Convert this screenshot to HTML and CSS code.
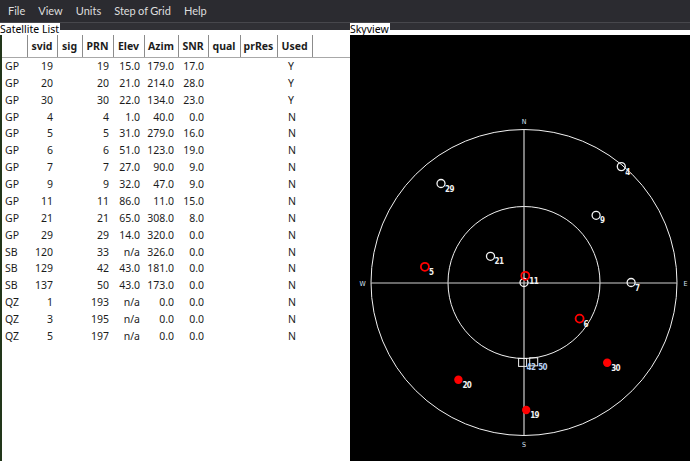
FILE: index.html
```html
<!DOCTYPE html>
<html>
<head>
<meta charset="utf-8">
<link rel="stylesheet" href="styles.css">
</head>
<body>
<div class="menubar">
  <span class="menu-item">File</span>
  <span class="menu-item">View</span>
  <span class="menu-item">Units</span>
  <span class="menu-item">Step of Grid</span>
  <span class="menu-item">Help</span>
</div>
<div class="main">
  <section class="dock dock-list">
    <div class="dock-title"><span class="dock-label">Satellite List</span></div>
    <table class="sat-table">
      <colgroup>
        <col class="c-type"><col class="c-svid"><col class="c-sig"><col class="c-prn"><col class="c-elev"><col class="c-azim"><col class="c-snr"><col class="c-qual"><col class="c-prres"><col class="c-used"><col class="c-fill">
      </colgroup>
      <thead>
        <tr><th></th><th>svid</th><th>sig</th><th>PRN</th><th>Elev</th><th>Azim</th><th>SNR</th><th>qual</th><th>prRes</th><th>Used</th><th class="fill"></th></tr>
      </thead>
      <tbody>
        <tr><td>GP</td><td>19</td><td></td><td>19</td><td>15.0</td><td>179.0</td><td>17.0</td><td></td><td></td><td>Y</td><td></td></tr>
        <tr><td>GP</td><td>20</td><td></td><td>20</td><td>21.0</td><td>214.0</td><td>28.0</td><td></td><td></td><td>Y</td><td></td></tr>
        <tr><td>GP</td><td>30</td><td></td><td>30</td><td>22.0</td><td>134.0</td><td>23.0</td><td></td><td></td><td>Y</td><td></td></tr>
        <tr><td>GP</td><td>4</td><td></td><td>4</td><td>1.0</td><td>40.0</td><td>0.0</td><td></td><td></td><td>N</td><td></td></tr>
        <tr><td>GP</td><td>5</td><td></td><td>5</td><td>31.0</td><td>279.0</td><td>16.0</td><td></td><td></td><td>N</td><td></td></tr>
        <tr><td>GP</td><td>6</td><td></td><td>6</td><td>51.0</td><td>123.0</td><td>19.0</td><td></td><td></td><td>N</td><td></td></tr>
        <tr><td>GP</td><td>7</td><td></td><td>7</td><td>27.0</td><td>90.0</td><td>9.0</td><td></td><td></td><td>N</td><td></td></tr>
        <tr><td>GP</td><td>9</td><td></td><td>9</td><td>32.0</td><td>47.0</td><td>9.0</td><td></td><td></td><td>N</td><td></td></tr>
        <tr><td>GP</td><td>11</td><td></td><td>11</td><td>86.0</td><td>11.0</td><td>15.0</td><td></td><td></td><td>N</td><td></td></tr>
        <tr><td>GP</td><td>21</td><td></td><td>21</td><td>65.0</td><td>308.0</td><td>8.0</td><td></td><td></td><td>N</td><td></td></tr>
        <tr><td>GP</td><td>29</td><td></td><td>29</td><td>14.0</td><td>320.0</td><td>0.0</td><td></td><td></td><td>N</td><td></td></tr>
        <tr><td>SB</td><td>120</td><td></td><td>33</td><td>n/a</td><td>326.0</td><td>0.0</td><td></td><td></td><td>N</td><td></td></tr>
        <tr><td>SB</td><td>129</td><td></td><td>42</td><td>43.0</td><td>181.0</td><td>0.0</td><td></td><td></td><td>N</td><td></td></tr>
        <tr><td>SB</td><td>137</td><td></td><td>50</td><td>43.0</td><td>173.0</td><td>0.0</td><td></td><td></td><td>N</td><td></td></tr>
        <tr><td>QZ</td><td>1</td><td></td><td>193</td><td>n/a</td><td>0.0</td><td>0.0</td><td></td><td></td><td>N</td><td></td></tr>
        <tr><td>QZ</td><td>3</td><td></td><td>195</td><td>n/a</td><td>0.0</td><td>0.0</td><td></td><td></td><td>N</td><td></td></tr>
        <tr><td>QZ</td><td>5</td><td></td><td>197</td><td>n/a</td><td>0.0</td><td>0.0</td><td></td><td></td><td>N</td><td></td></tr>
      </tbody>
    </table>
  </section>
  <section class="dock dock-sky">
    <div class="dock-title"><span class="dock-label">Skyview</span></div>
    <svg class="sky" viewBox="350 35 340 426" width="340" height="426">
      <rect x="350" y="35" width="340" height="426" fill="#000"/>
      <g class="grid">
        <circle cx="524" cy="282.5" r="153"/>
        <circle cx="524" cy="282.5" r="76"/>
        <line class="axis" x1="524" y1="129.5" x2="524" y2="435.5"/>
        <line class="axis" x1="371" y1="283" x2="677" y2="283"/>
      </g>
      <g class="cardinal">
        <text x="524" y="124">N</text>
        <text x="524" y="447">S</text>
        <text x="362.5" y="286">W</text>
        <text x="685.5" y="286">E</text>
      </g>
      <g class="sats">
        <circle class="sat-off" cx="524" cy="282.5" r="4"/>
        <circle class="sat-off" cx="621.3" cy="166.6" r="4"/>
        <circle class="sat-off" cx="631.1" cy="282.5" r="4"/>
        <circle class="sat-off" cx="596.1" cy="215.3" r="4"/>
        <circle class="sat-off" cx="490.5" cy="256.3" r="4"/>
        <circle class="sat-off" cx="441" cy="183.5" r="4"/>
        <circle class="sat-sig" cx="424.9" cy="266.8" r="4"/>
        <circle class="sat-sig" cx="579.6" cy="318.6" r="4"/>
        <circle class="sat-sig" cx="525.3" cy="275.8" r="4"/>
        <circle class="sat-used" cx="526.2" cy="410" r="4.2"/>
        <circle class="sat-used" cx="458.4" cy="379.7" r="4.2"/>
        <circle class="sat-used" cx="607.2" cy="362.8" r="4.2"/>
        <rect class="sat-sbas" x="518.6" y="358.4" width="8" height="8"/>
        <rect class="sat-sbas" x="529.7" y="357.8" width="8" height="8"/>
      </g>
      <g class="sat-labels">
        <text x="625.3" y="174.6">4</text>
        <text x="635.1" y="290.5">7</text>
        <text x="600.1" y="223.3">9</text>
        <text x="494.5" y="264.3">21</text>
        <text x="445" y="191.5">29</text>
        <text x="428.9" y="274.8">5</text>
        <text x="583.6" y="326.6">6</text>
        <text x="529.3" y="283.8">11</text>
        <text x="530.2" y="418">19</text>
        <text x="462.4" y="387.7">20</text>
        <text x="611.2" y="370.8">30</text>
        <text class="sb" x="526.6" y="370.4">42</text>
        <text class="sb" x="538.2" y="369.8">50</text>
      </g>
    </svg>
  </section>
</div>
</body>
</html>
```
FILE: styles.css
```css
html, body {
  margin: 0;
  padding: 0;
}
body {
  width: 690px;
  height: 461px;
  overflow: hidden;
  background: #fff;
  font-family: "Noto Sans", "Open Sans", sans-serif;
}
.menubar {
  height: 22px;
  background: #2b2b30;
  border-bottom: 1px solid #47474c;
  display: flex;
  align-items: center;
  padding-left: 8px;
  gap: 13px;
  box-sizing: content-box;
}
.menu-item {
  color: #dedede;
  font-family: Lato, "Noto Sans", sans-serif;
  font-size: 11px;
  line-height: 22px;
  word-spacing: -0.5px;
}
.main {
  display: flex;
  height: 438px;
}
.dock {
  display: flex;
  flex-direction: column;
}
.dock-list {
  width: 350px;
  background: #fff;
  border-left: 2px solid #22361a;
  box-sizing: border-box;
}
.dock-sky {
  width: 340px;
}
.dock-title {
  height: 12px;
  background: linear-gradient(#303035 0, #303035 7px, #ffffff 7px);
  display: flex;
}
.dock-label {
  background: #fff;
  color: #000;
  font-size: 10.5px;
  line-height: 12px;
  padding: 0 1px 0 0;
  white-space: nowrap;
}
.dock-list .dock-label {
  margin-left: -2px;
}
.sky {
  display: block;
}
.sat-table {
  border-collapse: collapse;
  table-layout: fixed;
  width: 348px;
  font-size: 10.5px;
  color: #1c1c1c;
}
.c-type { width: 25px; }
.c-svid { width: 30px; }
.c-sig { width: 25px; }
.c-prn { width: 31px; }
.c-elev { width: 31px; }
.c-azim { width: 34px; }
.c-snr { width: 30px; }
.c-qual { width: 32px; }
.c-prres { width: 37px; }
.c-used { width: 35px; }
.c-fill { width: 38px; }
.sat-table th {
  height: 22px;
  padding: 0;
  font-weight: bold;
  text-align: center;
  border-right: 1px solid #8c8c8c;
  border-bottom: 1px solid #a8a8a8;
  box-sizing: border-box;
  white-space: nowrap;
}
.sat-table th.fill {
  border-right: none;
}
.sat-table td {
  height: 16.875px;
  padding: 0 4px 0 0;
  text-align: right;
  white-space: nowrap;
  line-height: 16px;
}
.sat-table td:first-child {
  text-align: left;
  padding: 0 0 0 3px;
}
.sat-table td:nth-child(10) {
  text-align: left;
  padding-left: 11px;
}
.grid circle {
  fill: none;
  stroke: #f2f2f2;
  stroke-width: 1;
}
.grid .axis {
  stroke: #cfcfcf;
  stroke-width: 1.2;
}
.cardinal text {
  fill: #d6e2f5;
  font-family: "DejaVu Sans Condensed", "DejaVu Sans", sans-serif;
  font-size: 7px;
  text-anchor: middle;
}
.sat-off {
  fill: none;
  stroke: #f4f4f4;
  stroke-width: 1.3;
}
.sat-sig {
  fill: none;
  stroke: #ff0000;
  stroke-width: 1.8;
}
.sat-used {
  fill: #ff0000;
}
.sat-sbas {
  fill: none;
  stroke: #f0f0f0;
  stroke-width: 1;
}
.sat-labels text {
  fill: #f2f2f2;
  font-family: "DejaVu Sans Condensed", "DejaVu Sans", sans-serif;
  font-weight: bold;
  font-size: 8px;
  letter-spacing: -0.6px;
}
.sat-labels .sb {
  fill: #b8d2f2;
}
```
